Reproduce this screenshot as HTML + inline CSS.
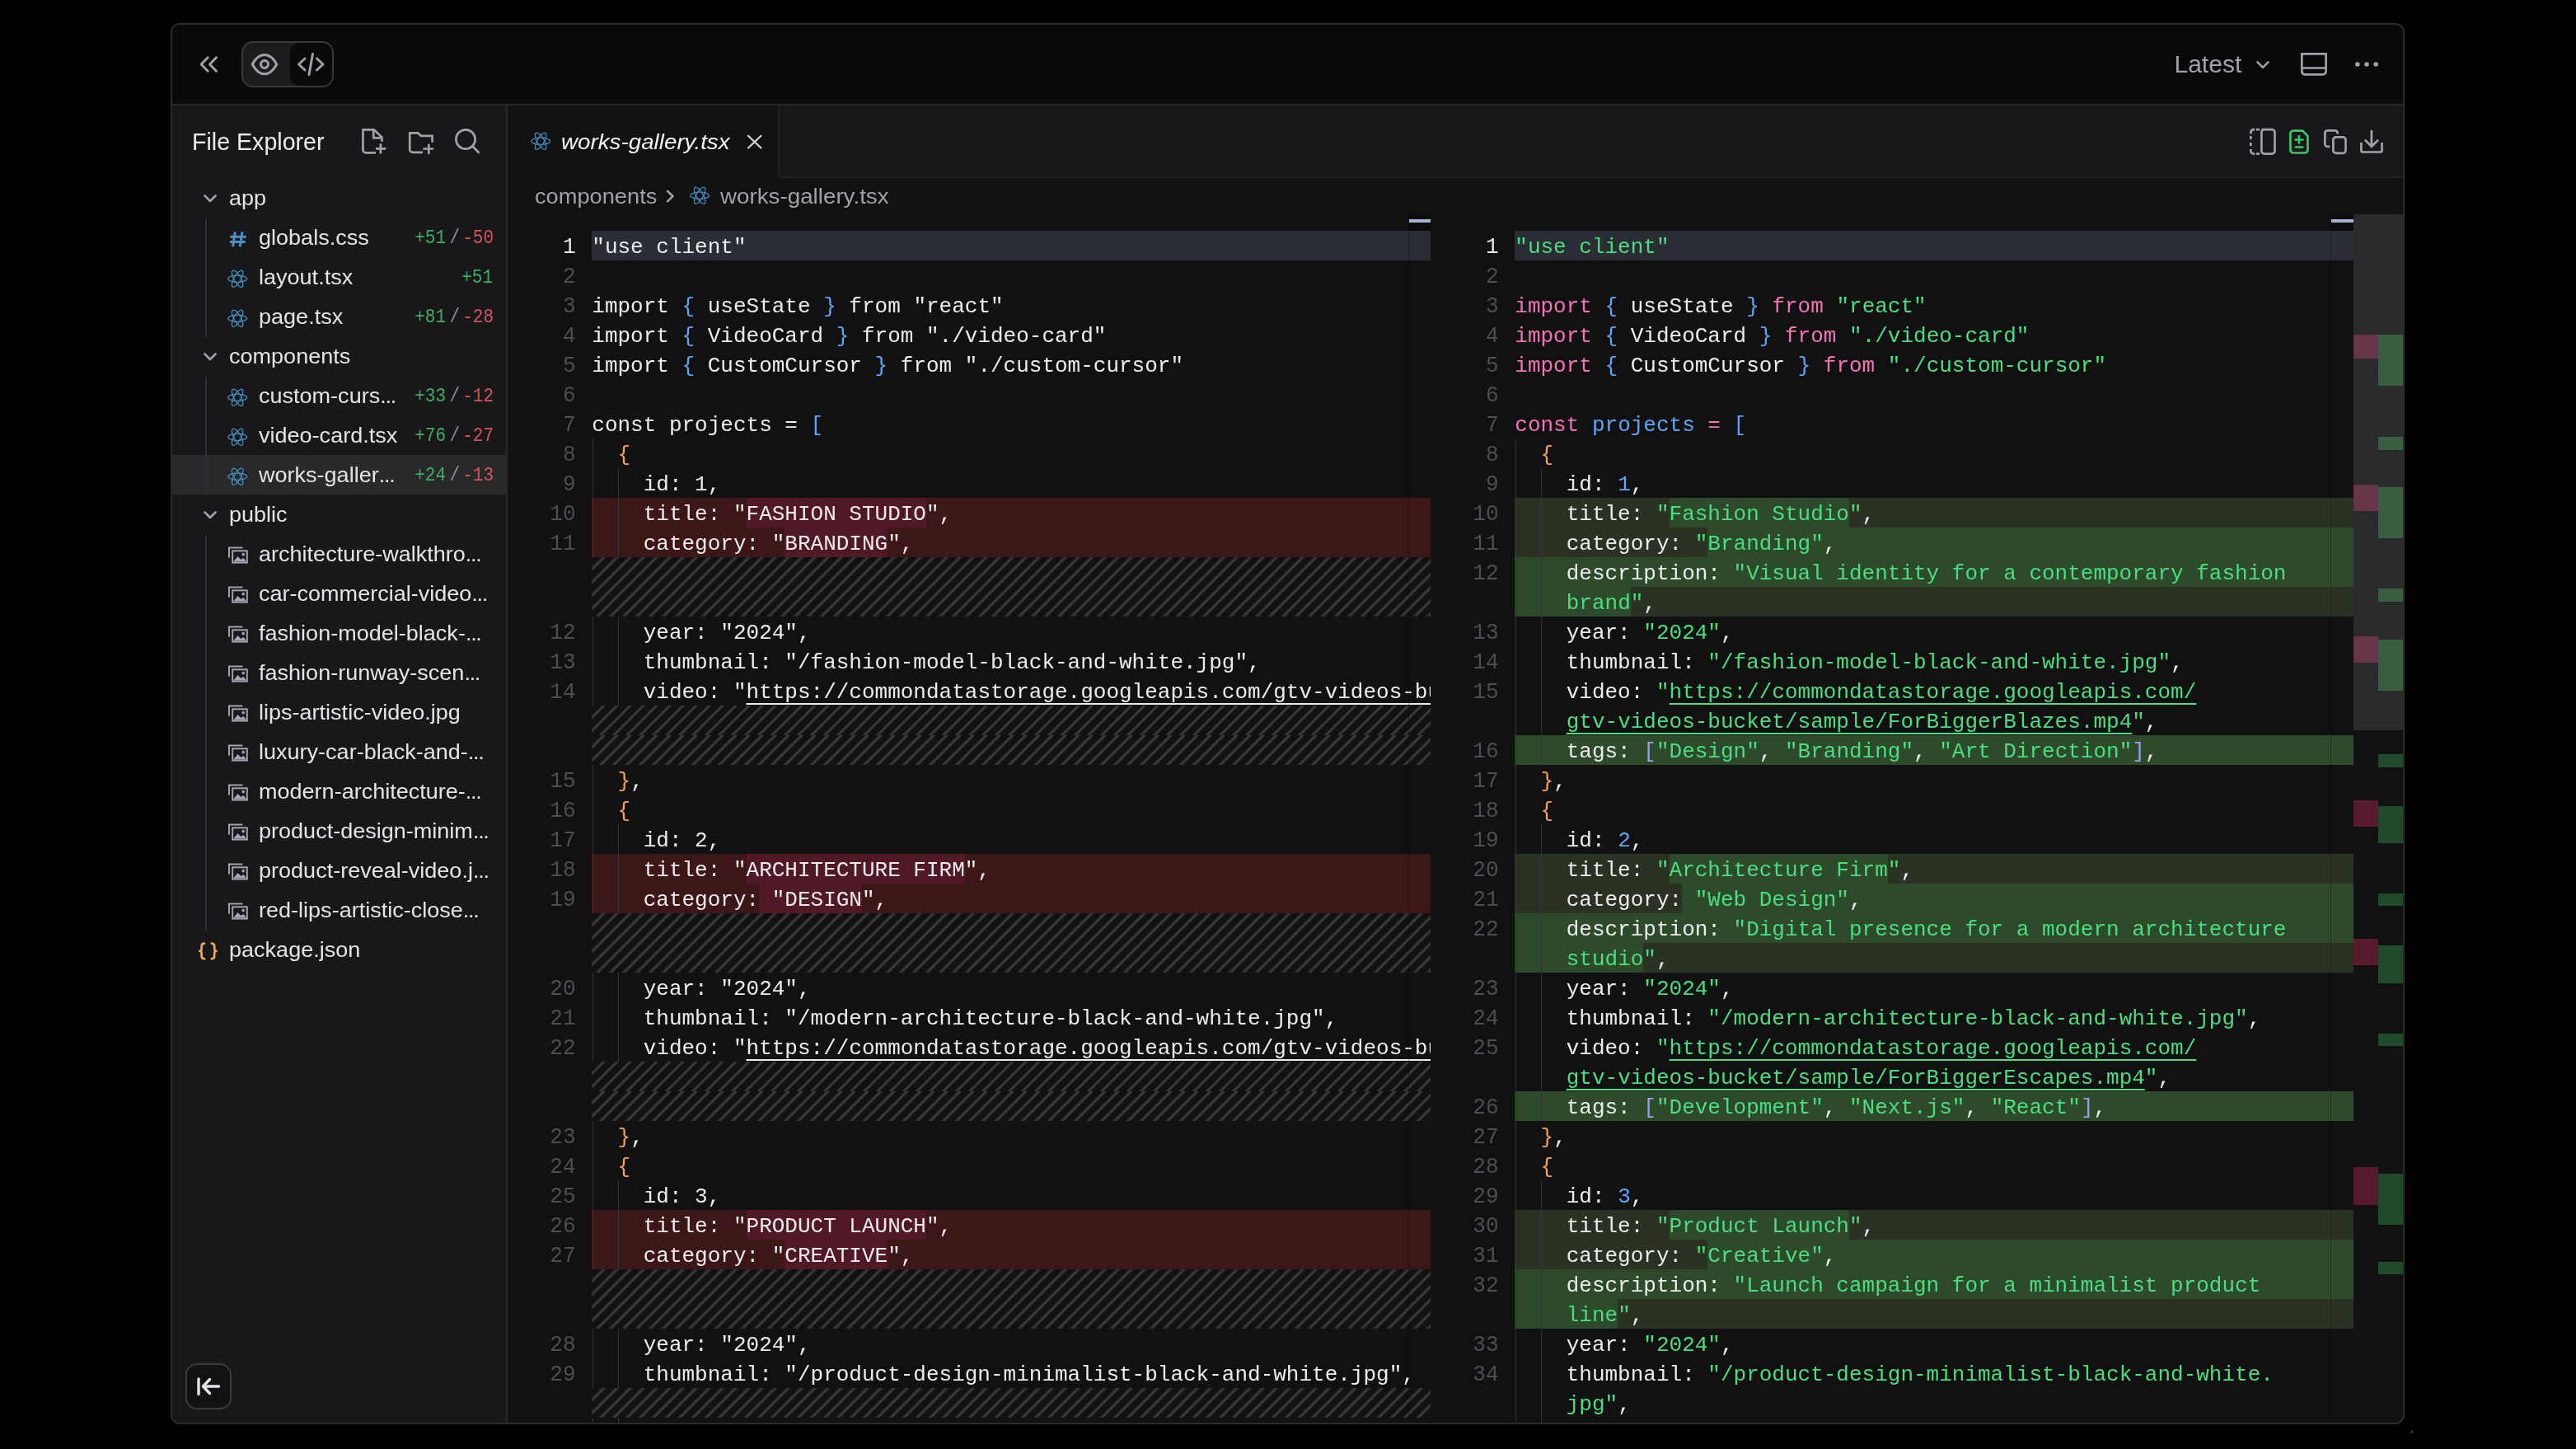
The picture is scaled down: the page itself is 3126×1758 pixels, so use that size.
<!DOCTYPE html><html><head><meta charset="utf-8"><style>
html,body{margin:0;padding:0;background:#000;}
body{width:3126px;height:1758px;overflow:hidden;position:relative;}
#win{will-change:transform;position:absolute;left:207px;top:28px;width:2707px;height:1696px;border:2px solid #2b2b2d;border-radius:11px;overflow:hidden;background:#111111;}
#win div, #win svg{position:absolute;}
.row{height:36px;}
.code{font-family:"Liberation Mono",monospace;font-size:26px;line-height:36px;white-space:pre;color:#ececee;}
.ln{font-family:"Liberation Mono",monospace;font-size:26px;line-height:36px;white-space:pre;color:#4b4f55;text-align:right;width:80px;transform:scaleY(1.07);transform-origin:0 25px;}
.hatch{background-color:#111111;background-image:linear-gradient(135deg, #353536 0%, #353536 6.4%, #111111 6.4%, #111111 43.6%, #353536 43.6%, #353536 56.4%, #111111 56.4%, #111111 93.6%, #353536 93.6%, #353536 100%);background-size:16px 16px;background-position:14.9px 0;}
.kp{color:#f472b6}.kb{color:#60a5fa}.ks{color:#4ade80}.ko{color:#f6a45b}.kv{color:#9d9df5}
.u{text-decoration:underline;text-decoration-thickness:2px;text-underline-offset:6px;text-decoration-skip-ink:none;}
</style></head><body><div id="win">
<div style="left:0;top:0;width:2707px;height:96px;background:#0a0a0a;"></div>
<div style="left:0;top:96px;width:2707px;height:2px;background:#2a2a2d;"></div>
<div style="left:0;top:98px;width:405px;height:1598px;background:#18181b;"></div>
<div style="left:405px;top:98px;width:2px;height:1598px;background:#2a2a2c;"></div>
<svg style="position:absolute;left:21px;top:25px;overflow:visible" width="50" height="45" viewBox="230 55 50 45" ><g fill="none" stroke="#a1a1aa" stroke-linecap="round" stroke-linejoin="round" stroke-width="3"><path d="M252.2,69.8 L244.2,78 L252.2,86.2"/><path d="M262.5,69.8 L254.5,78 L262.5,86.2"/></g></svg>
<div style="left:84px;top:20px;width:108px;height:52px;border:2px solid #38383b;border-radius:14px;background:#1c1c1f;"></div>
<div style="left:142.5px;top:22px;width:51.5px;height:52px;border-radius:12px;background:#0a0a0a;"></div>
<svg style="position:absolute;left:91px;top:30px;overflow:visible" width="45" height="36" viewBox="300 60 45 36" ><g fill="none" stroke="#a1a1aa" stroke-linecap="round" stroke-linejoin="round" stroke-width="3"><path d="M306.2,78 C310,71 315,66.5 321,66.5 C327,66.5 332,71 335.8,78 C332,85 327,89.8 321,89.8 C315,89.8 310,85 306.2,78 Z"/><circle cx="321" cy="78" r="4.5"/></g></svg>
<svg style="position:absolute;left:146px;top:30px;overflow:visible" width="45" height="36" viewBox="355 60 45 36" ><g fill="none" stroke="#a1a1aa" stroke-linecap="round" stroke-linejoin="round" stroke-width="3"><path d="M370,71 L362.5,78 L370,85"/><path d="M384.5,71 L392,78 L384.5,85"/><path d="M379.5,65.5 L375,90.5"/></g></svg>
<div style="position:absolute;left:2429.5px;top:28.10px;font-family:'Liberation Sans', sans-serif;font-size:30px;line-height:39px;color:#a1a1aa;white-space:pre;">Latest</div>
<svg style="position:absolute;left:2521px;top:35px;overflow:visible" width="30" height="25" viewBox="2730 65 30 25" ><g fill="none" stroke="#a1a1aa" stroke-linecap="round" stroke-linejoin="round" stroke-width="2.6"><path d="M2739.5,75.3 L2746,81.8 L2752.5,75.3"/></g></svg>
<svg style="position:absolute;left:2576px;top:28px;overflow:visible" width="45" height="40" viewBox="2785 58 45 40" ><g fill="none" stroke="#a1a1aa" stroke-linecap="butt" stroke-linejoin="miter" stroke-width="2.7"><path d="M2793.3,65.3 H2822.6 V86.8 A3.5,3.5 0 0 1 2819.1,90.3 H2796.8 A3.5,3.5 0 0 1 2793.3,86.8 Z"/><path d="M2793.5,82.5 H2822.5"/></g></svg>
<svg style="position:absolute;left:2641px;top:40px;overflow:visible" width="45" height="16" viewBox="2850 70 45 16" ><g fill="#a1a1aa"><circle cx="2860.8" cy="78" r="2.8"/><circle cx="2872" cy="78" r="2.8"/><circle cx="2883.2" cy="78" r="2.8"/></g></svg>
<div style="position:absolute;left:24px;top:124.09px;font-family:'Liberation Sans', sans-serif;font-size:28.6px;line-height:37px;color:#ececee;white-space:pre;">File Explorer</div>
<svg style="position:absolute;left:221px;top:120px;overflow:visible" width="45" height="45" viewBox="430 150 45 45" ><g fill="none" stroke="#a1a1aa" stroke-linecap="butt" stroke-linejoin="miter" stroke-width="2.7"><path d="M456,185.4 H444 A3.5,3.5 0 0 1 440.5,181.9 V157.4 H453.8 L463.4,166.6 V171.8"/><path d="M453.2,157.4 V167.3 H463.4"/><path d="M456,180.3 H468.2 M461.9,174.2 V186.5"/></g></svg>
<svg style="position:absolute;left:279px;top:120px;overflow:visible" width="45" height="45" viewBox="488 150 45 45" ><g fill="none" stroke="#a1a1aa" stroke-linecap="butt" stroke-linejoin="miter" stroke-width="2.7"><path d="M513,184.8 H500.7 A3.5,3.5 0 0 1 497.2,181.3 V161.3 H507.4 L510.8,164.9 H524.6 V172.8"/><path d="M513.5,180.5 H526 M520.3,174.8 V186.9"/></g></svg>
<svg style="position:absolute;left:336px;top:120px;overflow:visible" width="45" height="45" viewBox="545 150 45 45" ><g fill="none" stroke="#a1a1aa" stroke-linecap="butt" stroke-linejoin="miter" stroke-width="2.7"><circle cx="565" cy="169" r="11.6"/><path d="M573.3,177.3 L581.6,185.8"/></g></svg>
<div style="left:0;top:522.4px;width:405px;height:48px;background:#29292b;"></div>
<div style="left:40px;top:234.5px;width:1.5px;height:144px;background:#2b2f34;"></div>
<div style="left:40px;top:426.5px;width:1.5px;height:144px;background:#2b2f34;"></div>
<div style="left:40px;top:618.5px;width:1.5px;height:480px;background:#2b2f34;"></div>
<svg style="position:absolute;left:34px;top:200.7px;overflow:visible" width="24" height="20" viewBox="243 230.7 24 20" ><g fill="none" stroke="#a1a1aa" stroke-width="2.6" stroke-linecap="round" stroke-linejoin="round"><path d="M248.5,237.2 L255,243.7 L261.5,237.2"/></g></svg>
<div style="position:absolute;left:69px;top:194.06px;font-family:'Liberation Sans', sans-serif;font-size:25.5px;line-height:33px;color:#e4e4e7;white-space:pre;transform:scale(1.06,1);transform-origin:0 25.34px;">app</div>
<svg style="position:absolute;left:66.7px;top:248.0px;overflow:visible" width="28" height="26" viewBox="275.7 278.0 28 26" ><g fill="none" stroke="#4b90c2" stroke-width="3.0" stroke-linecap="butt"><path d="M285.0,281.3 L282.3,299.3 M293.6,281.3 L290.9,299.3 M279.0,287.3 H298.3 M278.5,293.6 H297.5"/></g></svg>
<div style="position:absolute;left:105.1px;top:242.06px;font-family:'Liberation Sans', sans-serif;font-size:25.5px;line-height:33px;color:#e4e4e7;white-space:pre;transform:scale(1.06,1);transform-origin:0 25.34px;">globals.css</div>
<div style="position:absolute;left:352.2px;top:246.10px;font-family:'Liberation Mono', monospace;font-size:21px;line-height:27px;color:#d0565b;white-space:pre;transform:scale(1,1.18);transform-origin:0 19.10px;">-50</div>
<div style="position:absolute;left:336.5px;top:246.10px;font-family:'Liberation Mono', monospace;font-size:21px;line-height:27px;color:#8e8e96;white-space:pre;transform:scale(1,1.18);transform-origin:0 19.10px;">/</div>
<div style="position:absolute;left:294.2px;top:246.10px;font-family:'Liberation Mono', monospace;font-size:21px;line-height:27px;color:#3fae5e;white-space:pre;transform:scale(1,1.18);transform-origin:0 19.10px;">+51</div>
<svg style="position:absolute;left:65.4px;top:294.5px;overflow:visible" width="28.3" height="26.5" viewBox="274.4 324.5 28.3 26.5" ><g fill="none" stroke="#448cbd" stroke-width="1.25"><ellipse cx="288.54999999999995" cy="337.75" rx="11.45" ry="4.16" transform="rotate(0 288.54999999999995 337.75)"/><ellipse cx="288.54999999999995" cy="337.75" rx="11.45" ry="4.16" transform="rotate(60 288.54999999999995 337.75)"/><ellipse cx="288.54999999999995" cy="337.75" rx="11.45" ry="4.16" transform="rotate(120 288.54999999999995 337.75)"/></g></svg>
<div style="position:absolute;left:105.1px;top:290.06px;font-family:'Liberation Sans', sans-serif;font-size:25.5px;line-height:33px;color:#e4e4e7;white-space:pre;transform:scale(1.06,1);transform-origin:0 25.34px;">layout.tsx</div>
<div style="position:absolute;left:351.2px;top:294.10px;font-family:'Liberation Mono', monospace;font-size:21px;line-height:27px;color:#3fae5e;white-space:pre;transform:scale(1,1.18);transform-origin:0 19.10px;">+51</div>
<svg style="position:absolute;left:65.4px;top:342.5px;overflow:visible" width="28.3" height="26.5" viewBox="274.4 372.5 28.3 26.5" ><g fill="none" stroke="#448cbd" stroke-width="1.25"><ellipse cx="288.54999999999995" cy="385.75" rx="11.45" ry="4.16" transform="rotate(0 288.54999999999995 385.75)"/><ellipse cx="288.54999999999995" cy="385.75" rx="11.45" ry="4.16" transform="rotate(60 288.54999999999995 385.75)"/><ellipse cx="288.54999999999995" cy="385.75" rx="11.45" ry="4.16" transform="rotate(120 288.54999999999995 385.75)"/></g></svg>
<div style="position:absolute;left:105.1px;top:338.06px;font-family:'Liberation Sans', sans-serif;font-size:25.5px;line-height:33px;color:#e4e4e7;white-space:pre;transform:scale(1.06,1);transform-origin:0 25.34px;">page.tsx</div>
<div style="position:absolute;left:352.2px;top:342.10px;font-family:'Liberation Mono', monospace;font-size:21px;line-height:27px;color:#d0565b;white-space:pre;transform:scale(1,1.18);transform-origin:0 19.10px;">-28</div>
<div style="position:absolute;left:336.5px;top:342.10px;font-family:'Liberation Mono', monospace;font-size:21px;line-height:27px;color:#8e8e96;white-space:pre;transform:scale(1,1.18);transform-origin:0 19.10px;">/</div>
<div style="position:absolute;left:294.2px;top:342.10px;font-family:'Liberation Mono', monospace;font-size:21px;line-height:27px;color:#3fae5e;white-space:pre;transform:scale(1,1.18);transform-origin:0 19.10px;">+81</div>
<svg style="position:absolute;left:34px;top:392.7px;overflow:visible" width="24" height="20" viewBox="243 422.7 24 20" ><g fill="none" stroke="#a1a1aa" stroke-width="2.6" stroke-linecap="round" stroke-linejoin="round"><path d="M248.5,429.2 L255,435.7 L261.5,429.2"/></g></svg>
<div style="position:absolute;left:69px;top:386.06px;font-family:'Liberation Sans', sans-serif;font-size:25.5px;line-height:33px;color:#e4e4e7;white-space:pre;transform:scale(1.06,1);transform-origin:0 25.34px;">components</div>
<svg style="position:absolute;left:65.4px;top:438.5px;overflow:visible" width="28.3" height="26.5" viewBox="274.4 468.5 28.3 26.5" ><g fill="none" stroke="#448cbd" stroke-width="1.25"><ellipse cx="288.54999999999995" cy="481.75" rx="11.45" ry="4.16" transform="rotate(0 288.54999999999995 481.75)"/><ellipse cx="288.54999999999995" cy="481.75" rx="11.45" ry="4.16" transform="rotate(60 288.54999999999995 481.75)"/><ellipse cx="288.54999999999995" cy="481.75" rx="11.45" ry="4.16" transform="rotate(120 288.54999999999995 481.75)"/></g></svg>
<div style="position:absolute;left:105.1px;top:434.06px;font-family:'Liberation Sans', sans-serif;font-size:25.5px;line-height:33px;color:#e4e4e7;white-space:pre;transform:scale(1.06,1);transform-origin:0 25.34px;">custom-curs<span style="letter-spacing:-1.2px">...</span></div>
<div style="position:absolute;left:352.2px;top:438.10px;font-family:'Liberation Mono', monospace;font-size:21px;line-height:27px;color:#d0565b;white-space:pre;transform:scale(1,1.18);transform-origin:0 19.10px;">-12</div>
<div style="position:absolute;left:336.5px;top:438.10px;font-family:'Liberation Mono', monospace;font-size:21px;line-height:27px;color:#8e8e96;white-space:pre;transform:scale(1,1.18);transform-origin:0 19.10px;">/</div>
<div style="position:absolute;left:294.2px;top:438.10px;font-family:'Liberation Mono', monospace;font-size:21px;line-height:27px;color:#3fae5e;white-space:pre;transform:scale(1,1.18);transform-origin:0 19.10px;">+33</div>
<svg style="position:absolute;left:65.4px;top:486.5px;overflow:visible" width="28.3" height="26.5" viewBox="274.4 516.5 28.3 26.5" ><g fill="none" stroke="#448cbd" stroke-width="1.25"><ellipse cx="288.54999999999995" cy="529.75" rx="11.45" ry="4.16" transform="rotate(0 288.54999999999995 529.75)"/><ellipse cx="288.54999999999995" cy="529.75" rx="11.45" ry="4.16" transform="rotate(60 288.54999999999995 529.75)"/><ellipse cx="288.54999999999995" cy="529.75" rx="11.45" ry="4.16" transform="rotate(120 288.54999999999995 529.75)"/></g></svg>
<div style="position:absolute;left:105.1px;top:482.06px;font-family:'Liberation Sans', sans-serif;font-size:25.5px;line-height:33px;color:#e4e4e7;white-space:pre;transform:scale(1.06,1);transform-origin:0 25.34px;">video-card.tsx</div>
<div style="position:absolute;left:352.2px;top:486.10px;font-family:'Liberation Mono', monospace;font-size:21px;line-height:27px;color:#d0565b;white-space:pre;transform:scale(1,1.18);transform-origin:0 19.10px;">-27</div>
<div style="position:absolute;left:336.5px;top:486.10px;font-family:'Liberation Mono', monospace;font-size:21px;line-height:27px;color:#8e8e96;white-space:pre;transform:scale(1,1.18);transform-origin:0 19.10px;">/</div>
<div style="position:absolute;left:294.2px;top:486.10px;font-family:'Liberation Mono', monospace;font-size:21px;line-height:27px;color:#3fae5e;white-space:pre;transform:scale(1,1.18);transform-origin:0 19.10px;">+76</div>
<svg style="position:absolute;left:65.4px;top:534.5px;overflow:visible" width="28.3" height="26.5" viewBox="274.4 564.5 28.3 26.5" ><g fill="none" stroke="#448cbd" stroke-width="1.25"><ellipse cx="288.54999999999995" cy="577.75" rx="11.45" ry="4.16" transform="rotate(0 288.54999999999995 577.75)"/><ellipse cx="288.54999999999995" cy="577.75" rx="11.45" ry="4.16" transform="rotate(60 288.54999999999995 577.75)"/><ellipse cx="288.54999999999995" cy="577.75" rx="11.45" ry="4.16" transform="rotate(120 288.54999999999995 577.75)"/></g></svg>
<div style="position:absolute;left:105.1px;top:530.06px;font-family:'Liberation Sans', sans-serif;font-size:25.5px;line-height:33px;color:#e4e4e7;white-space:pre;transform:scale(1.06,1);transform-origin:0 25.34px;">works-galler<span style="letter-spacing:-1.2px">...</span></div>
<div style="position:absolute;left:352.2px;top:534.10px;font-family:'Liberation Mono', monospace;font-size:21px;line-height:27px;color:#d0565b;white-space:pre;transform:scale(1,1.18);transform-origin:0 19.10px;">-13</div>
<div style="position:absolute;left:336.5px;top:534.10px;font-family:'Liberation Mono', monospace;font-size:21px;line-height:27px;color:#8e8e96;white-space:pre;transform:scale(1,1.18);transform-origin:0 19.10px;">/</div>
<div style="position:absolute;left:294.2px;top:534.10px;font-family:'Liberation Mono', monospace;font-size:21px;line-height:27px;color:#3fae5e;white-space:pre;transform:scale(1,1.18);transform-origin:0 19.10px;">+24</div>
<svg style="position:absolute;left:34px;top:584.7px;overflow:visible" width="24" height="20" viewBox="243 614.7 24 20" ><g fill="none" stroke="#a1a1aa" stroke-width="2.6" stroke-linecap="round" stroke-linejoin="round"><path d="M248.5,621.2 L255,627.7 L261.5,621.2"/></g></svg>
<div style="position:absolute;left:69px;top:578.06px;font-family:'Liberation Sans', sans-serif;font-size:25.5px;line-height:33px;color:#e4e4e7;white-space:pre;transform:scale(1.06,1);transform-origin:0 25.34px;">public</div>
<svg style="position:absolute;left:65.6px;top:631.2px;overflow:visible" width="30" height="26" viewBox="274.6 661.2 30 26" ><g fill="none" stroke="#a1a1aa" stroke-width="2"><path d="M277.60,676.70 V664.80 H294.00"/><rect x="281.80" y="668.50" width="17.6" height="14.3"/></g><circle cx="294.80" cy="672.80" r="1.9" fill="#a1a1aa"/><path d="M282.80,681.80 L288.20,675.20 L292.00,679.20 L295.20,677.20 L298.50,681.80 Z" fill="#aba1ba"/></svg>
<div style="position:absolute;left:105.1px;top:626.06px;font-family:'Liberation Sans', sans-serif;font-size:25.5px;line-height:33px;color:#e4e4e7;white-space:pre;transform:scale(1.06,1);transform-origin:0 25.34px;">architecture-walkthro<span style="letter-spacing:-1.2px">...</span></div>
<svg style="position:absolute;left:65.6px;top:679.2px;overflow:visible" width="30" height="26" viewBox="274.6 709.2 30 26" ><g fill="none" stroke="#a1a1aa" stroke-width="2"><path d="M277.60,724.70 V712.80 H294.00"/><rect x="281.80" y="716.50" width="17.6" height="14.3"/></g><circle cx="294.80" cy="720.80" r="1.9" fill="#a1a1aa"/><path d="M282.80,729.80 L288.20,723.20 L292.00,727.20 L295.20,725.20 L298.50,729.80 Z" fill="#aba1ba"/></svg>
<div style="position:absolute;left:105.1px;top:674.06px;font-family:'Liberation Sans', sans-serif;font-size:25.5px;line-height:33px;color:#e4e4e7;white-space:pre;transform:scale(1.06,1);transform-origin:0 25.34px;">car-commercial-video<span style="letter-spacing:-1.2px">...</span></div>
<svg style="position:absolute;left:65.6px;top:727.2px;overflow:visible" width="30" height="26" viewBox="274.6 757.2 30 26" ><g fill="none" stroke="#a1a1aa" stroke-width="2"><path d="M277.60,772.70 V760.80 H294.00"/><rect x="281.80" y="764.50" width="17.6" height="14.3"/></g><circle cx="294.80" cy="768.80" r="1.9" fill="#a1a1aa"/><path d="M282.80,777.80 L288.20,771.20 L292.00,775.20 L295.20,773.20 L298.50,777.80 Z" fill="#aba1ba"/></svg>
<div style="position:absolute;left:105.1px;top:722.06px;font-family:'Liberation Sans', sans-serif;font-size:25.5px;line-height:33px;color:#e4e4e7;white-space:pre;transform:scale(1.06,1);transform-origin:0 25.34px;">fashion-model-black-<span style="letter-spacing:-1.2px">...</span></div>
<svg style="position:absolute;left:65.6px;top:775.2px;overflow:visible" width="30" height="26" viewBox="274.6 805.2 30 26" ><g fill="none" stroke="#a1a1aa" stroke-width="2"><path d="M277.60,820.70 V808.80 H294.00"/><rect x="281.80" y="812.50" width="17.6" height="14.3"/></g><circle cx="294.80" cy="816.80" r="1.9" fill="#a1a1aa"/><path d="M282.80,825.80 L288.20,819.20 L292.00,823.20 L295.20,821.20 L298.50,825.80 Z" fill="#aba1ba"/></svg>
<div style="position:absolute;left:105.1px;top:770.06px;font-family:'Liberation Sans', sans-serif;font-size:25.5px;line-height:33px;color:#e4e4e7;white-space:pre;transform:scale(1.06,1);transform-origin:0 25.34px;">fashion-runway-scen<span style="letter-spacing:-1.2px">...</span></div>
<svg style="position:absolute;left:65.6px;top:823.2px;overflow:visible" width="30" height="26" viewBox="274.6 853.2 30 26" ><g fill="none" stroke="#a1a1aa" stroke-width="2"><path d="M277.60,868.70 V856.80 H294.00"/><rect x="281.80" y="860.50" width="17.6" height="14.3"/></g><circle cx="294.80" cy="864.80" r="1.9" fill="#a1a1aa"/><path d="M282.80,873.80 L288.20,867.20 L292.00,871.20 L295.20,869.20 L298.50,873.80 Z" fill="#aba1ba"/></svg>
<div style="position:absolute;left:105.1px;top:818.06px;font-family:'Liberation Sans', sans-serif;font-size:25.5px;line-height:33px;color:#e4e4e7;white-space:pre;transform:scale(1.06,1);transform-origin:0 25.34px;">lips-artistic-video.jpg</div>
<svg style="position:absolute;left:65.6px;top:871.2px;overflow:visible" width="30" height="26" viewBox="274.6 901.2 30 26" ><g fill="none" stroke="#a1a1aa" stroke-width="2"><path d="M277.60,916.70 V904.80 H294.00"/><rect x="281.80" y="908.50" width="17.6" height="14.3"/></g><circle cx="294.80" cy="912.80" r="1.9" fill="#a1a1aa"/><path d="M282.80,921.80 L288.20,915.20 L292.00,919.20 L295.20,917.20 L298.50,921.80 Z" fill="#aba1ba"/></svg>
<div style="position:absolute;left:105.1px;top:866.06px;font-family:'Liberation Sans', sans-serif;font-size:25.5px;line-height:33px;color:#e4e4e7;white-space:pre;transform:scale(1.06,1);transform-origin:0 25.34px;">luxury-car-black-and-<span style="letter-spacing:-1.2px">...</span></div>
<svg style="position:absolute;left:65.6px;top:919.2px;overflow:visible" width="30" height="26" viewBox="274.6 949.2 30 26" ><g fill="none" stroke="#a1a1aa" stroke-width="2"><path d="M277.60,964.70 V952.80 H294.00"/><rect x="281.80" y="956.50" width="17.6" height="14.3"/></g><circle cx="294.80" cy="960.80" r="1.9" fill="#a1a1aa"/><path d="M282.80,969.80 L288.20,963.20 L292.00,967.20 L295.20,965.20 L298.50,969.80 Z" fill="#aba1ba"/></svg>
<div style="position:absolute;left:105.1px;top:914.06px;font-family:'Liberation Sans', sans-serif;font-size:25.5px;line-height:33px;color:#e4e4e7;white-space:pre;transform:scale(1.06,1);transform-origin:0 25.34px;">modern-architecture-<span style="letter-spacing:-1.2px">...</span></div>
<svg style="position:absolute;left:65.6px;top:967.2px;overflow:visible" width="30" height="26" viewBox="274.6 997.2 30 26" ><g fill="none" stroke="#a1a1aa" stroke-width="2"><path d="M277.60,1012.70 V1000.80 H294.00"/><rect x="281.80" y="1004.50" width="17.6" height="14.3"/></g><circle cx="294.80" cy="1008.80" r="1.9" fill="#a1a1aa"/><path d="M282.80,1017.80 L288.20,1011.20 L292.00,1015.20 L295.20,1013.20 L298.50,1017.80 Z" fill="#aba1ba"/></svg>
<div style="position:absolute;left:105.1px;top:962.06px;font-family:'Liberation Sans', sans-serif;font-size:25.5px;line-height:33px;color:#e4e4e7;white-space:pre;transform:scale(1.06,1);transform-origin:0 25.34px;">product-design-minim<span style="letter-spacing:-1.2px">...</span></div>
<svg style="position:absolute;left:65.6px;top:1015.2px;overflow:visible" width="30" height="26" viewBox="274.6 1045.2 30 26" ><g fill="none" stroke="#a1a1aa" stroke-width="2"><path d="M277.60,1060.70 V1048.80 H294.00"/><rect x="281.80" y="1052.50" width="17.6" height="14.3"/></g><circle cx="294.80" cy="1056.80" r="1.9" fill="#a1a1aa"/><path d="M282.80,1065.80 L288.20,1059.20 L292.00,1063.20 L295.20,1061.20 L298.50,1065.80 Z" fill="#aba1ba"/></svg>
<div style="position:absolute;left:105.1px;top:1010.06px;font-family:'Liberation Sans', sans-serif;font-size:25.5px;line-height:33px;color:#e4e4e7;white-space:pre;transform:scale(1.06,1);transform-origin:0 25.34px;">product-reveal-video.j<span style="letter-spacing:-1.2px">...</span></div>
<svg style="position:absolute;left:65.6px;top:1063.2px;overflow:visible" width="30" height="26" viewBox="274.6 1093.2 30 26" ><g fill="none" stroke="#a1a1aa" stroke-width="2"><path d="M277.60,1108.70 V1096.80 H294.00"/><rect x="281.80" y="1100.50" width="17.6" height="14.3"/></g><circle cx="294.80" cy="1104.80" r="1.9" fill="#a1a1aa"/><path d="M282.80,1113.80 L288.20,1107.20 L292.00,1111.20 L295.20,1109.20 L298.50,1113.80 Z" fill="#aba1ba"/></svg>
<div style="position:absolute;left:105.1px;top:1058.06px;font-family:'Liberation Sans', sans-serif;font-size:25.5px;line-height:33px;color:#e4e4e7;white-space:pre;transform:scale(1.06,1);transform-origin:0 25.34px;">red-lips-artistic-close<span style="letter-spacing:-1.2px">...</span></div>
<svg style="position:absolute;left:29px;top:1110.0px;overflow:visible" width="30" height="28" viewBox="238 1140.0 30 28" ><g fill="none" stroke="#f2a455" stroke-width="2.7" stroke-linecap="round" stroke-linejoin="round"><path d="M248,1144.6 C245.2,1144.6 244.6,1146.0 244.6,1148.0 V1151.3 C244.6,1152.9 243.7,1153.9 242.2,1153.9 C243.7,1153.9 244.6,1154.9 244.6,1156.5 V1159.8 C244.6,1161.8 245.2,1163.3 248,1163.3"/><path d="M256.8,1144.6 C259.6,1144.6 260.2,1146.0 260.2,1148.0 V1151.3 C260.2,1152.9 261.1,1153.9 262.6,1153.9 C261.1,1153.9 260.2,1154.9 260.2,1156.5 V1159.8 C260.2,1161.8 259.6,1163.3 256.8,1163.3"/></g></svg>
<div style="position:absolute;left:69.4px;top:1106.06px;font-family:'Liberation Sans', sans-serif;font-size:25.5px;line-height:33px;color:#e4e4e7;white-space:pre;transform:scale(1.06,1);transform-origin:0 25.34px;">package.json</div>
<div style="left:16px;top:1624px;width:52px;height:52px;border:2px solid #3a3a3d;border-radius:14px;background:#121214;"></div>
<svg style="position:absolute;left:26px;top:1635px;overflow:visible" width="40" height="35" viewBox="235 1665 40 35" ><g fill="none" stroke="#e4e4e7" stroke-width="3.4" stroke-linecap="round" stroke-linejoin="round"><path d="M241,1673 V1691.5"/><path d="M247,1682 H265.5"/><path d="M254.5,1673.5 L246.5,1682 L254.5,1690.5"/></g></svg>
<div style="left:735px;top:98px;width:1972px;height:86px;background:#18181b;"></div>
<div style="left:735px;top:98px;width:2px;height:88px;background:#1f2122;"></div>
<div style="left:735px;top:184px;width:1972px;height:2px;background:#1f2122;"></div>
<svg style="position:absolute;left:432.7px;top:128px;overflow:visible" width="28.3" height="26.5" viewBox="641.7 158 28.3 26.5" ><g fill="none" stroke="#448cbd" stroke-width="1.25"><ellipse cx="655.85" cy="171.25" rx="11.45" ry="4.16" transform="rotate(0 655.85 171.25)"/><ellipse cx="655.85" cy="171.25" rx="11.45" ry="4.16" transform="rotate(60 655.85 171.25)"/><ellipse cx="655.85" cy="171.25" rx="11.45" ry="4.16" transform="rotate(120 655.85 171.25)"/></g></svg>
<div style="position:absolute;left:471.5px;top:125.12px;font-family:'Liberation Sans', sans-serif;font-size:26.2px;line-height:34px;color:#f4f4f5;white-space:pre;transform:scale(1.06,1);transform-origin:0 26.08px;font-style:italic;">works-gallery.tsx</div>
<svg style="position:absolute;left:691px;top:125px;overflow:visible" width="30" height="32" viewBox="900 155 30 32" ><g fill="none" stroke="#d4d4d8" stroke-width="2.2" stroke-linecap="round"><path d="M908,164.7 L923.5,179.5 M923.5,164.7 L908,179.5"/></g></svg>
<svg style="position:absolute;left:2511px;top:120px;overflow:visible" width="50" height="45" viewBox="2720 150 50 45" ><g fill="none" stroke="#a1a1aa" stroke-linecap="butt" stroke-linejoin="miter" stroke-width="2.7"><path d="M2736.3,157.2 H2735 A3.7,3.7 0 0 0 2731.3,160.9 V162.6 M2737.9,157.2 H2742 M2731.3,164.9 V169.1 M2731.3,173 V177.1 M2731.3,181 V182.9 A3.7,3.7 0 0 0 2735,186.6 H2736.3 M2737.9,186.6 H2742"/><path d="M2744.4,157.2 H2757 A3.5,3.5 0 0 1 2760.5,160.7 V183.1 A3.5,3.5 0 0 1 2757,186.6 H2747.9 A3.5,3.5 0 0 1 2744.4,183.1 V160.7 A3.5,3.5 0 0 1 2747.9,157.2 Z"/></g></svg>
<svg style="position:absolute;left:2561px;top:120px;overflow:visible" width="40" height="45" viewBox="2770 150 40 45" ><g fill="none" stroke="#3ec46b" stroke-width="2.7" stroke-linecap="butt" stroke-linejoin="round"><path d="M2794.4,158.6 H2782.9 A3.5,3.5 0 0 0 2779.4,162.1 V182 A3.5,3.5 0 0 0 2782.9,185.5 H2796.9 A3.5,3.5 0 0 0 2800.4,182 V165.1 Z"/><path d="M2789.9,163.9 V174.4 M2784.6,169.5 H2795.5 M2784.6,178.5 H2795.5"/></g></svg>
<svg style="position:absolute;left:2603px;top:120px;overflow:visible" width="45" height="45" viewBox="2812 150 45 45" ><g fill="none" stroke="#a1a1aa" stroke-linecap="butt" stroke-linejoin="miter" stroke-width="2.7"><path d="M2827.3,177.8 H2824.6 A3.3,3.3 0 0 1 2821.3,174.5 V161.6 A3.3,3.3 0 0 1 2824.6,158.3 H2833.4 A3.3,3.3 0 0 1 2836.7,161.6 V162.4"/><path d="M2834.9,166.3 H2843 A3.5,3.5 0 0 1 2846.5,169.8 V182.4 A3.5,3.5 0 0 1 2843,185.9 H2834.9 A3.5,3.5 0 0 1 2831.4,182.4 V169.8 A3.5,3.5 0 0 1 2834.9,166.3 Z"/></g></svg>
<svg style="position:absolute;left:2647px;top:120px;overflow:visible" width="45" height="45" viewBox="2856 150 45 45" ><g fill="none" stroke="#a1a1aa" stroke-linecap="butt" stroke-linejoin="miter" stroke-width="2.7"><path d="M2877.9,157.9 V176.5 M2869.9,169.8 L2877.9,177.8 L2886,169.8"/><path d="M2865.4,173 V182.5 A2,2 0 0 0 2867.4,184.5 H2888.5 A2,2 0 0 0 2890.5,182.5 V173"/></g></svg>
<div style="position:absolute;left:440px;top:191.79px;font-family:'Liberation Sans', sans-serif;font-size:25.7px;line-height:33px;color:#a1a1aa;white-space:pre;transform:scale(1.06,1);transform-origin:0 25.41px;">components</div>
<svg style="position:absolute;left:591px;top:195px;overflow:visible" width="25" height="30" viewBox="800 225 25 30" ><g fill="none" stroke="#a1a1aa" stroke-linecap="round" stroke-linejoin="round" stroke-width="2.6"><path d="M810,231.8 L816.5,238.1 L810,244.4"/></g></svg>
<svg style="position:absolute;left:626px;top:194.3px;overflow:visible" width="28.3" height="26.5" viewBox="835 224.3 28.3 26.5" ><g fill="none" stroke="#448cbd" stroke-width="1.25"><ellipse cx="849.15" cy="237.55" rx="11.45" ry="4.16" transform="rotate(0 849.15 237.55)"/><ellipse cx="849.15" cy="237.55" rx="11.45" ry="4.16" transform="rotate(60 849.15 237.55)"/><ellipse cx="849.15" cy="237.55" rx="11.45" ry="4.16" transform="rotate(120 849.15 237.55)"/></g></svg>
<div style="position:absolute;left:664.7px;top:191.12px;font-family:'Liberation Sans', sans-serif;font-size:26.2px;line-height:34px;color:#a1a1aa;white-space:pre;transform:scale(1.06,1);transform-origin:0 26.08px;">works-gallery.tsx</div>
<div style="left:509.0px;top:250px;width:1018.00px;height:36px;background:#2a2d33;"></div>
<div style="left:509.0px;top:574px;width:1018.00px;height:36px;background:#3d1618;"></div>
<div style="left:696.5px;top:574px;width:218.40px;height:36px;background:#511826;"></div>
<div style="left:509.0px;top:610px;width:1018.00px;height:36px;background:#3d1618;"></div>
<div style="left:743.3px;top:610px;width:124.80px;height:36px;background:#511826;"></div>
<div style="left:509.0px;top:1006px;width:1018.00px;height:36px;background:#3d1618;"></div>
<div style="left:696.5px;top:1006px;width:265.20px;height:36px;background:#511826;"></div>
<div style="left:509.0px;top:1042px;width:1018.00px;height:36px;background:#3d1618;"></div>
<div style="left:712.1px;top:1042px;width:124.80px;height:36px;background:#511826;"></div>
<div style="left:509.0px;top:1438px;width:1018.00px;height:36px;background:#3d1618;"></div>
<div style="left:696.5px;top:1438px;width:218.40px;height:36px;background:#511826;"></div>
<div style="left:509.0px;top:1474px;width:1018.00px;height:36px;background:#3d1618;"></div>
<div style="left:743.3px;top:1474px;width:124.80px;height:36px;background:#511826;"></div>
<div class="hatch" style="left:509.0px;top:646px;width:1018.00px;height:72px;"></div>
<div class="hatch" style="left:509.0px;top:826px;width:1018.00px;height:36px;"></div>
<div class="hatch" style="left:509.0px;top:862px;width:1018.00px;height:36px;"></div>
<div class="hatch" style="left:509.0px;top:1078px;width:1018.00px;height:72px;"></div>
<div class="hatch" style="left:509.0px;top:1258px;width:1018.00px;height:36px;"></div>
<div class="hatch" style="left:509.0px;top:1294px;width:1018.00px;height:36px;"></div>
<div class="hatch" style="left:509.0px;top:1510px;width:1018.00px;height:72px;"></div>
<div class="hatch" style="left:509.0px;top:1654px;width:1018.00px;height:36px;"></div>
<div style="left:1629.0px;top:250px;width:1018.00px;height:36px;background:#2a2d33;"></div>
<div style="left:1629.0px;top:574px;width:1018.00px;height:36px;background:#2a3223;"></div>
<div style="left:1816.5px;top:574px;width:218.40px;height:36px;background:#2d4b2b;"></div>
<div style="left:1629.0px;top:610px;width:234.30px;height:36px;background:#2a3223;"></div>
<div style="left:1863.3px;top:610px;width:783.70px;height:36px;background:#2d4b2b;"></div>
<div style="left:1629.0px;top:646px;width:1018.00px;height:36px;background:#2d4b2b;"></div>
<div style="left:1629.0px;top:682px;width:1018.00px;height:36px;background:#2a3223;"></div>
<div style="left:1629.0px;top:682px;width:140.70px;height:36px;background:#2d4b2b;"></div>
<div style="left:1629.0px;top:862px;width:1018.00px;height:36px;background:#2d4b2b;"></div>
<div style="left:1629.0px;top:1006px;width:1018.00px;height:36px;background:#2a3223;"></div>
<div style="left:1816.5px;top:1006px;width:265.20px;height:36px;background:#2d4b2b;"></div>
<div style="left:1629.0px;top:1042px;width:203.10px;height:36px;background:#2a3223;"></div>
<div style="left:1832.1px;top:1042px;width:814.90px;height:36px;background:#2d4b2b;"></div>
<div style="left:1629.0px;top:1078px;width:1018.00px;height:36px;background:#2d4b2b;"></div>
<div style="left:1629.0px;top:1114px;width:1018.00px;height:36px;background:#2a3223;"></div>
<div style="left:1629.0px;top:1114px;width:156.30px;height:36px;background:#2d4b2b;"></div>
<div style="left:1629.0px;top:1294px;width:1018.00px;height:36px;background:#2d4b2b;"></div>
<div style="left:1629.0px;top:1438px;width:1018.00px;height:36px;background:#2a3223;"></div>
<div style="left:1816.5px;top:1438px;width:218.40px;height:36px;background:#2d4b2b;"></div>
<div style="left:1629.0px;top:1474px;width:234.30px;height:36px;background:#2a3223;"></div>
<div style="left:1863.3px;top:1474px;width:783.70px;height:36px;background:#2d4b2b;"></div>
<div style="left:1629.0px;top:1510px;width:1018.00px;height:36px;background:#2d4b2b;"></div>
<div style="left:1629.0px;top:1546px;width:1018.00px;height:36px;background:#2a3223;"></div>
<div style="left:1629.0px;top:1546px;width:125.10px;height:36px;background:#2d4b2b;"></div>
<div style="left:509.50px;top:502px;width:1.5px;height:144px;background:#333335;"></div>
<div style="left:509.50px;top:718px;width:1.5px;height:108px;background:#333335;"></div>
<div style="left:509.50px;top:898px;width:1.5px;height:180px;background:#333335;"></div>
<div style="left:509.50px;top:1150px;width:1.5px;height:108px;background:#333335;"></div>
<div style="left:509.50px;top:1330px;width:1.5px;height:180px;background:#333335;"></div>
<div style="left:509.50px;top:1582px;width:1.5px;height:72px;background:#333335;"></div>
<div style="left:509.50px;top:1690px;width:1.5px;height:36px;background:#333335;"></div>
<div style="left:540.70px;top:538px;width:1.5px;height:108px;background:#333335;"></div>
<div style="left:540.70px;top:718px;width:1.5px;height:108px;background:#333335;"></div>
<div style="left:540.70px;top:970px;width:1.5px;height:108px;background:#333335;"></div>
<div style="left:540.70px;top:1150px;width:1.5px;height:108px;background:#333335;"></div>
<div style="left:540.70px;top:1402px;width:1.5px;height:108px;background:#333335;"></div>
<div style="left:540.70px;top:1582px;width:1.5px;height:72px;background:#333335;"></div>
<div style="left:540.70px;top:1690px;width:1.5px;height:36px;background:#333335;"></div>
<div style="left:1629.50px;top:502px;width:1.5px;height:1224px;background:#333335;"></div>
<div style="left:1660.70px;top:538px;width:1.5px;height:360px;background:#333335;"></div>
<div style="left:1660.70px;top:970px;width:1.5px;height:360px;background:#333335;"></div>
<div style="left:1660.70px;top:1402px;width:1.5px;height:324px;background:#333335;"></div>
<div style="left:1500.5px;top:230px;width:26.5px;height:20px;background:#0c0c0c;"></div>
<div style="left:2620px;top:230px;width:27px;height:20px;background:#0c0c0c;"></div>
<div style="left:1500.5px;top:236.3px;width:26.5px;height:3.5px;background:#a3b3cf;"></div>
<div style="left:2620px;top:236.3px;width:27px;height:3.5px;background:#a3b3cf;"></div>
<div class="ln" style="left:409.5px;top:251.70px;color:#ececee;">1</div>
<div class="code" style="left:509.3px;top:251.70px;width:1017.70px;height:36px;overflow:hidden;">"use client"</div>
<div class="ln" style="left:409.5px;top:287.70px;">2</div>
<div class="ln" style="left:409.5px;top:323.70px;">3</div>
<div class="code" style="left:509.3px;top:323.70px;width:1017.70px;height:36px;overflow:hidden;">import <span class="kb">{</span> useState <span class="kb">}</span> from "react"</div>
<div class="ln" style="left:409.5px;top:359.70px;">4</div>
<div class="code" style="left:509.3px;top:359.70px;width:1017.70px;height:36px;overflow:hidden;">import <span class="kb">{</span> VideoCard <span class="kb">}</span> from "./video-card"</div>
<div class="ln" style="left:409.5px;top:395.70px;">5</div>
<div class="code" style="left:509.3px;top:395.70px;width:1017.70px;height:36px;overflow:hidden;">import <span class="kb">{</span> CustomCursor <span class="kb">}</span> from "./custom-cursor"</div>
<div class="ln" style="left:409.5px;top:431.70px;">6</div>
<div class="ln" style="left:409.5px;top:467.70px;">7</div>
<div class="code" style="left:509.3px;top:467.70px;width:1017.70px;height:36px;overflow:hidden;">const projects = <span class="kb">[</span></div>
<div class="ln" style="left:409.5px;top:503.70px;">8</div>
<div class="code" style="left:509.3px;top:503.70px;width:1017.70px;height:36px;overflow:hidden;">  <span class="ko">{</span></div>
<div class="ln" style="left:409.5px;top:539.70px;">9</div>
<div class="code" style="left:509.3px;top:539.70px;width:1017.70px;height:36px;overflow:hidden;">    id: 1,</div>
<div class="ln" style="left:409.5px;top:575.70px;">10</div>
<div class="code" style="left:509.3px;top:575.70px;width:1017.70px;height:36px;overflow:hidden;">    title: "FASHION STUDIO",</div>
<div class="ln" style="left:409.5px;top:611.70px;">11</div>
<div class="code" style="left:509.3px;top:611.70px;width:1017.70px;height:36px;overflow:hidden;">    category: "BRANDING",</div>
<div class="ln" style="left:409.5px;top:719.70px;">12</div>
<div class="code" style="left:509.3px;top:719.70px;width:1017.70px;height:36px;overflow:hidden;">    year: "2024",</div>
<div class="ln" style="left:409.5px;top:755.70px;">13</div>
<div class="code" style="left:509.3px;top:755.70px;width:1017.70px;height:36px;overflow:hidden;">    thumbnail: "/fashion-model-black-and-white.jpg",</div>
<div class="ln" style="left:409.5px;top:791.70px;">14</div>
<div class="code" style="left:509.3px;top:791.70px;width:1017.70px;height:36px;overflow:hidden;">    video: "<span class="u">https://commondatastorage.googleapis.com/gtv-videos-bucket/sample/ForBiggerBlazes.mp4</span>",</div>
<div class="ln" style="left:409.5px;top:899.70px;">15</div>
<div class="code" style="left:509.3px;top:899.70px;width:1017.70px;height:36px;overflow:hidden;">  <span class="ko">}</span>,</div>
<div class="ln" style="left:409.5px;top:935.70px;">16</div>
<div class="code" style="left:509.3px;top:935.70px;width:1017.70px;height:36px;overflow:hidden;">  <span class="ko">{</span></div>
<div class="ln" style="left:409.5px;top:971.70px;">17</div>
<div class="code" style="left:509.3px;top:971.70px;width:1017.70px;height:36px;overflow:hidden;">    id: 2,</div>
<div class="ln" style="left:409.5px;top:1007.70px;">18</div>
<div class="code" style="left:509.3px;top:1007.70px;width:1017.70px;height:36px;overflow:hidden;">    title: "ARCHITECTURE FIRM",</div>
<div class="ln" style="left:409.5px;top:1043.70px;">19</div>
<div class="code" style="left:509.3px;top:1043.70px;width:1017.70px;height:36px;overflow:hidden;">    category: "DESIGN",</div>
<div class="ln" style="left:409.5px;top:1151.70px;">20</div>
<div class="code" style="left:509.3px;top:1151.70px;width:1017.70px;height:36px;overflow:hidden;">    year: "2024",</div>
<div class="ln" style="left:409.5px;top:1187.70px;">21</div>
<div class="code" style="left:509.3px;top:1187.70px;width:1017.70px;height:36px;overflow:hidden;">    thumbnail: "/modern-architecture-black-and-white.jpg",</div>
<div class="ln" style="left:409.5px;top:1223.70px;">22</div>
<div class="code" style="left:509.3px;top:1223.70px;width:1017.70px;height:36px;overflow:hidden;">    video: "<span class="u">https://commondatastorage.googleapis.com/gtv-videos-bucket/sample/ForBiggerEscapes.mp4</span>",</div>
<div class="ln" style="left:409.5px;top:1331.70px;">23</div>
<div class="code" style="left:509.3px;top:1331.70px;width:1017.70px;height:36px;overflow:hidden;">  <span class="ko">}</span>,</div>
<div class="ln" style="left:409.5px;top:1367.70px;">24</div>
<div class="code" style="left:509.3px;top:1367.70px;width:1017.70px;height:36px;overflow:hidden;">  <span class="ko">{</span></div>
<div class="ln" style="left:409.5px;top:1403.70px;">25</div>
<div class="code" style="left:509.3px;top:1403.70px;width:1017.70px;height:36px;overflow:hidden;">    id: 3,</div>
<div class="ln" style="left:409.5px;top:1439.70px;">26</div>
<div class="code" style="left:509.3px;top:1439.70px;width:1017.70px;height:36px;overflow:hidden;">    title: "PRODUCT LAUNCH",</div>
<div class="ln" style="left:409.5px;top:1475.70px;">27</div>
<div class="code" style="left:509.3px;top:1475.70px;width:1017.70px;height:36px;overflow:hidden;">    category: "CREATIVE",</div>
<div class="ln" style="left:409.5px;top:1583.70px;">28</div>
<div class="code" style="left:509.3px;top:1583.70px;width:1017.70px;height:36px;overflow:hidden;">    year: "2024",</div>
<div class="ln" style="left:409.5px;top:1619.70px;">29</div>
<div class="code" style="left:509.3px;top:1619.70px;width:1017.70px;height:36px;overflow:hidden;">    thumbnail: "/product-design-minimalist-black-and-white.jpg",</div>
<div class="ln" style="left:1529.5px;top:251.70px;color:#ececee;">1</div>
<div class="code" style="left:1629.3px;top:251.70px;width:1017.70px;height:36px;overflow:hidden;"><span class="ks">"use client"</span></div>
<div class="ln" style="left:1529.5px;top:287.70px;">2</div>
<div class="ln" style="left:1529.5px;top:323.70px;">3</div>
<div class="code" style="left:1629.3px;top:323.70px;width:1017.70px;height:36px;overflow:hidden;"><span class="kp">import</span> <span class="kb">{</span> useState <span class="kb">}</span> <span class="kp">from</span> <span class="ks">"react"</span></div>
<div class="ln" style="left:1529.5px;top:359.70px;">4</div>
<div class="code" style="left:1629.3px;top:359.70px;width:1017.70px;height:36px;overflow:hidden;"><span class="kp">import</span> <span class="kb">{</span> VideoCard <span class="kb">}</span> <span class="kp">from</span> <span class="ks">"./video-card"</span></div>
<div class="ln" style="left:1529.5px;top:395.70px;">5</div>
<div class="code" style="left:1629.3px;top:395.70px;width:1017.70px;height:36px;overflow:hidden;"><span class="kp">import</span> <span class="kb">{</span> CustomCursor <span class="kb">}</span> <span class="kp">from</span> <span class="ks">"./custom-cursor"</span></div>
<div class="ln" style="left:1529.5px;top:431.70px;">6</div>
<div class="ln" style="left:1529.5px;top:467.70px;">7</div>
<div class="code" style="left:1629.3px;top:467.70px;width:1017.70px;height:36px;overflow:hidden;"><span class="kp">const</span> <span class="kb">projects</span> <span class="kp">=</span> <span class="kb">[</span></div>
<div class="ln" style="left:1529.5px;top:503.70px;">8</div>
<div class="code" style="left:1629.3px;top:503.70px;width:1017.70px;height:36px;overflow:hidden;">  <span class="ko">{</span></div>
<div class="ln" style="left:1529.5px;top:539.70px;">9</div>
<div class="code" style="left:1629.3px;top:539.70px;width:1017.70px;height:36px;overflow:hidden;">    id: <span class="kb">1</span>,</div>
<div class="ln" style="left:1529.5px;top:575.70px;">10</div>
<div class="code" style="left:1629.3px;top:575.70px;width:1017.70px;height:36px;overflow:hidden;">    title: <span class="ks">"Fashion Studio"</span>,</div>
<div class="ln" style="left:1529.5px;top:611.70px;">11</div>
<div class="code" style="left:1629.3px;top:611.70px;width:1017.70px;height:36px;overflow:hidden;">    category: <span class="ks">"Branding"</span>,</div>
<div class="ln" style="left:1529.5px;top:647.70px;">12</div>
<div class="code" style="left:1629.3px;top:647.70px;width:1017.70px;height:36px;overflow:hidden;">    description: <span class="ks">"Visual identity for a contemporary fashion</span></div>
<div class="code" style="left:1629.3px;top:683.70px;width:1017.70px;height:36px;overflow:hidden;">    <span class="ks">brand"</span>,</div>
<div class="ln" style="left:1529.5px;top:719.70px;">13</div>
<div class="code" style="left:1629.3px;top:719.70px;width:1017.70px;height:36px;overflow:hidden;">    year: <span class="ks">"2024"</span>,</div>
<div class="ln" style="left:1529.5px;top:755.70px;">14</div>
<div class="code" style="left:1629.3px;top:755.70px;width:1017.70px;height:36px;overflow:hidden;">    thumbnail: <span class="ks">"/fashion-model-black-and-white.jpg"</span>,</div>
<div class="ln" style="left:1529.5px;top:791.70px;">15</div>
<div class="code" style="left:1629.3px;top:791.70px;width:1017.70px;height:36px;overflow:hidden;">    video: <span class="ks">"</span><span class="ks u">https://commondatastorage.googleapis.com/</span></div>
<div class="code" style="left:1629.3px;top:827.70px;width:1017.70px;height:36px;overflow:hidden;">    <span class="ks u">gtv-videos-bucket/sample/ForBiggerBlazes.mp4</span><span class="ks">"</span>,</div>
<div class="ln" style="left:1529.5px;top:863.70px;">16</div>
<div class="code" style="left:1629.3px;top:863.70px;width:1017.70px;height:36px;overflow:hidden;">    tags: <span class="kv">[</span><span class="ks">"Design"</span>, <span class="ks">"Branding"</span>, <span class="ks">"Art Direction"</span><span class="kv">]</span>,</div>
<div class="ln" style="left:1529.5px;top:899.70px;">17</div>
<div class="code" style="left:1629.3px;top:899.70px;width:1017.70px;height:36px;overflow:hidden;">  <span class="ko">}</span>,</div>
<div class="ln" style="left:1529.5px;top:935.70px;">18</div>
<div class="code" style="left:1629.3px;top:935.70px;width:1017.70px;height:36px;overflow:hidden;">  <span class="ko">{</span></div>
<div class="ln" style="left:1529.5px;top:971.70px;">19</div>
<div class="code" style="left:1629.3px;top:971.70px;width:1017.70px;height:36px;overflow:hidden;">    id: <span class="kb">2</span>,</div>
<div class="ln" style="left:1529.5px;top:1007.70px;">20</div>
<div class="code" style="left:1629.3px;top:1007.70px;width:1017.70px;height:36px;overflow:hidden;">    title: <span class="ks">"Architecture Firm"</span>,</div>
<div class="ln" style="left:1529.5px;top:1043.70px;">21</div>
<div class="code" style="left:1629.3px;top:1043.70px;width:1017.70px;height:36px;overflow:hidden;">    category: <span class="ks">"Web Design"</span>,</div>
<div class="ln" style="left:1529.5px;top:1079.70px;">22</div>
<div class="code" style="left:1629.3px;top:1079.70px;width:1017.70px;height:36px;overflow:hidden;">    description: <span class="ks">"Digital presence for a modern architecture</span></div>
<div class="code" style="left:1629.3px;top:1115.70px;width:1017.70px;height:36px;overflow:hidden;">    <span class="ks">studio"</span>,</div>
<div class="ln" style="left:1529.5px;top:1151.70px;">23</div>
<div class="code" style="left:1629.3px;top:1151.70px;width:1017.70px;height:36px;overflow:hidden;">    year: <span class="ks">"2024"</span>,</div>
<div class="ln" style="left:1529.5px;top:1187.70px;">24</div>
<div class="code" style="left:1629.3px;top:1187.70px;width:1017.70px;height:36px;overflow:hidden;">    thumbnail: <span class="ks">"/modern-architecture-black-and-white.jpg"</span>,</div>
<div class="ln" style="left:1529.5px;top:1223.70px;">25</div>
<div class="code" style="left:1629.3px;top:1223.70px;width:1017.70px;height:36px;overflow:hidden;">    video: <span class="ks">"</span><span class="ks u">https://commondatastorage.googleapis.com/</span></div>
<div class="code" style="left:1629.3px;top:1259.70px;width:1017.70px;height:36px;overflow:hidden;">    <span class="ks u">gtv-videos-bucket/sample/ForBiggerEscapes.mp4</span><span class="ks">"</span>,</div>
<div class="ln" style="left:1529.5px;top:1295.70px;">26</div>
<div class="code" style="left:1629.3px;top:1295.70px;width:1017.70px;height:36px;overflow:hidden;">    tags: <span class="kv">[</span><span class="ks">"Development"</span>, <span class="ks">"Next.js"</span>, <span class="ks">"React"</span><span class="kv">]</span>,</div>
<div class="ln" style="left:1529.5px;top:1331.70px;">27</div>
<div class="code" style="left:1629.3px;top:1331.70px;width:1017.70px;height:36px;overflow:hidden;">  <span class="ko">}</span>,</div>
<div class="ln" style="left:1529.5px;top:1367.70px;">28</div>
<div class="code" style="left:1629.3px;top:1367.70px;width:1017.70px;height:36px;overflow:hidden;">  <span class="ko">{</span></div>
<div class="ln" style="left:1529.5px;top:1403.70px;">29</div>
<div class="code" style="left:1629.3px;top:1403.70px;width:1017.70px;height:36px;overflow:hidden;">    id: <span class="kb">3</span>,</div>
<div class="ln" style="left:1529.5px;top:1439.70px;">30</div>
<div class="code" style="left:1629.3px;top:1439.70px;width:1017.70px;height:36px;overflow:hidden;">    title: <span class="ks">"Product Launch"</span>,</div>
<div class="ln" style="left:1529.5px;top:1475.70px;">31</div>
<div class="code" style="left:1629.3px;top:1475.70px;width:1017.70px;height:36px;overflow:hidden;">    category: <span class="ks">"Creative"</span>,</div>
<div class="ln" style="left:1529.5px;top:1511.70px;">32</div>
<div class="code" style="left:1629.3px;top:1511.70px;width:1017.70px;height:36px;overflow:hidden;">    description: <span class="ks">"Launch campaign for a minimalist product</span></div>
<div class="code" style="left:1629.3px;top:1547.70px;width:1017.70px;height:36px;overflow:hidden;">    <span class="ks">line"</span>,</div>
<div class="ln" style="left:1529.5px;top:1583.70px;">33</div>
<div class="code" style="left:1629.3px;top:1583.70px;width:1017.70px;height:36px;overflow:hidden;">    year: <span class="ks">"2024"</span>,</div>
<div class="ln" style="left:1529.5px;top:1619.70px;">34</div>
<div class="code" style="left:1629.3px;top:1619.70px;width:1017.70px;height:36px;overflow:hidden;">    thumbnail: <span class="ks">"/product-design-minimalist-black-and-white.</span></div>
<div class="code" style="left:1629.3px;top:1655.70px;width:1017.70px;height:36px;overflow:hidden;">    <span class="ks">jpg"</span>,</div>
<div style="left:2647px;top:230px;width:60px;height:626px;background:#2b2b2e;"></div>
<div style="left:2647px;top:376px;width:29.6px;height:29.0px;background:#663548;"></div>
<div style="left:2676.6px;top:376px;width:30.4px;height:61.6px;background:#3b5d42;"></div>
<div style="left:2676.6px;top:499.5px;width:30.4px;height:16.5px;background:#3b5d42;"></div>
<div style="left:2647px;top:557.8px;width:29.6px;height:32.2px;background:#663548;"></div>
<div style="left:2676.6px;top:561px;width:30.4px;height:61.9px;background:#3b5d42;"></div>
<div style="left:2676.6px;top:684.3px;width:30.4px;height:15.7px;background:#3b5d42;"></div>
<div style="left:2647px;top:741.8px;width:29.6px;height:32.2px;background:#663548;"></div>
<div style="left:2676.6px;top:745.8px;width:30.4px;height:61.9px;background:#3b5d42;"></div>
<div style="left:2676.6px;top:885px;width:30.4px;height:15.8px;background:#1f4a2b;"></div>
<div style="left:2647px;top:941.4px;width:29.6px;height:31.6px;background:#571b2d;"></div>
<div style="left:2676.6px;top:947.5px;width:30.4px;height:45.5px;background:#1f4a2b;"></div>
<div style="left:2676.6px;top:1053.8px;width:30.4px;height:15.7px;background:#1f4a2b;"></div>
<div style="left:2647px;top:1109px;width:29.6px;height:31.6px;background:#571b2d;"></div>
<div style="left:2676.6px;top:1117px;width:30.4px;height:46.0px;background:#1f4a2b;"></div>
<div style="left:2676.6px;top:1223.8px;width:30.4px;height:15.7px;background:#1f4a2b;"></div>
<div style="left:2647px;top:1385.9px;width:29.6px;height:46.1px;background:#571b2d;"></div>
<div style="left:2676.6px;top:1393.8px;width:30.4px;height:61.9px;background:#1f4a2b;"></div>
<div style="left:2676.6px;top:1500.6px;width:30.4px;height:15.8px;background:#1f4a2b;"></div>
<div style="left:1499.5px;top:230px;width:1.2px;height:1466px;background:rgba(0,0,0,0.3);"></div>
<div style="left:2619px;top:230px;width:1.2px;height:1466px;background:rgba(0,0,0,0.3);"></div>
</div>
<svg style="position:absolute;left:2922px;top:1733px" width="8" height="7"><path d="M1.5,5.5 L6,5.5 L6,1.5 Z" fill="#3a3a3a"/></svg>
</body></html>
